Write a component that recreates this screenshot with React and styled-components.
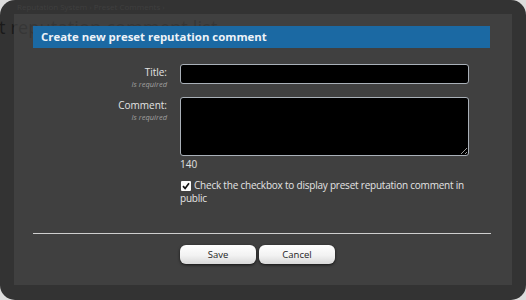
import styled, { createGlobalStyle } from 'styled-components';

const GlobalStyle = createGlobalStyle`
  html, body {
    margin: 0;
    padding: 0;
    background: #dcdcdc;
  }
  * {
    box-sizing: border-box;
  }
`;

export default function App() {
  return (
    <>
      <GlobalStyle />
      <Overlay>
        <Backdrop aria-hidden="true">
          <Crumb>Reputation System ›  Preset Comments ›</Crumb>
          <PageTitle>t reputation comment list</PageTitle>
        </Backdrop>

        <Panel>
          <Heading>Create new preset reputation comment</Heading>

          <Form>
            <Row>
              <Label>
                Title:
                <Hint>Is required</Hint>
              </Label>
              <Field>
                <TextBox type="text" />
              </Field>
            </Row>

            <Row>
              <Label>
                Comment:
                <Hint>Is required</Hint>
              </Label>
              <Field>
                <TextArea />
                <Counter>140</Counter>
              </Field>
            </Row>

            <Row>
              <Label />
              <Field>
                <CheckRow>
                  <Box>
                    <svg width="8" height="8" viewBox="0 0 8 8">
                      <path d="M1 4.2 L3.1 6.4 L7 1.2" fill="none" stroke="#111" strokeWidth="1.7" />
                    </svg>
                  </Box>
                  Check the checkbox to display preset reputation comment in public
                </CheckRow>
              </Field>
            </Row>
          </Form>

          <Divider />

          <Buttons>
            <Button>Save</Button>
            <Button>Cancel</Button>
          </Buttons>
        </Panel>
      </Overlay>
    </>
  );
}

const Overlay = styled.div`
  position: relative;
  width: 526px;
  height: 300px;
  background: #333333;
  border-radius: 15px;
  padding: 14px 14px 15px 14px;
  overflow: hidden;
  font-family: 'Open Sans', 'Liberation Sans', sans-serif;
`;

const Backdrop = styled.div`
  position: absolute;
  left: 0;
  top: 0;
  right: 0;
  pointer-events: none;
`;

const Crumb = styled.div`
  padding: 1px 0 0 17px;
  font-size: 8px;
  line-height: 11px;
  color: #3f3f3f;
`;

const PageTitle = styled.div`
  margin-top: 5px;
  margin-left: -1px;
  font-size: 18px;
  line-height: 20px;
  letter-spacing: 0.2px;
  color: #1a1a1a;
`;

const Panel = styled.div`
  position: relative;
  height: 100%;
  background: rgba(74, 74, 74, 0.6);
  padding-top: 12px;
`;

const Heading = styled.div`
  height: 22px;
  margin: 0 22px 0 19px;
  background: #1b69a3;
  color: #eef3f8;
  font-size: 11.4px;
  font-weight: 700;
  line-height: 22px;
  padding-left: 8px;
`;

const Form = styled.div`
  display: flex;
  flex-direction: column;
  gap: 8px;
  margin-top: 16px;
`;

const Row = styled.div`
  display: grid;
  grid-template-columns: 153px 289px;
  column-gap: 13px;
  align-items: start;
`;

const Label = styled.div`
  text-align: right;
  color: #e4e4e4;
  font-size: 10px;
  line-height: 13px;
  padding-top: 2px;
`;

const Hint = styled.div`
  font-size: 7.5px;
  line-height: 10px;
  font-style: italic;
  color: #a0a0a0;
`;

const Field = styled.div`
  display: flex;
  flex-direction: column;
`;

const TextBox = styled.input`
  width: 289px;
  height: 20px;
  background: #000;
  border: 1px solid #a9b0b8;
  border-radius: 3px;
  color: #fff;
  outline: none;
`;

const TextArea = styled.textarea`
  width: 289px;
  height: 59px;
  background: #000;
  border: 1px solid #a9b0b8;
  border-radius: 3px;
  color: #fff;
  outline: none;
  resize: vertical;
  display: block;
`;

const Counter = styled.div`
  margin-top: 2px;
  font-size: 10px;
  line-height: 13px;
  color: #e0e0e0;
`;

const CheckRow = styled.div`
  font-size: 10px;
  line-height: 13px;
  letter-spacing: -0.22px;
  color: #e4e4e4;
`;

const Box = styled.span`
  display: inline-flex;
  align-items: center;
  justify-content: center;
  width: 10px;
  height: 10px;
  background: #fbfbfb;
  border-radius: 1px;
  margin: 0 3px 0 1px;
  vertical-align: -1px;
`;

const Divider = styled.div`
  margin: 28px 21px 0 19px;
  height: 1px;
  background: #cfcfcf;
`;

const Buttons = styled.div`
  display: flex;
  gap: 3px;
  margin-top: 11px;
  padding-left: 166px;
`;

const Button = styled.button`
  width: 76px;
  height: 19px;
  border: none;
  border-radius: 6px;
  background: linear-gradient(#ffffff, #f2f2f2 55%, #d9d9d9);
  box-shadow: 0 1px 3px rgba(0, 0, 0, 0.7);
  font-family: 'Open Sans', 'Liberation Sans', sans-serif;
  font-size: 9.5px;
  color: #1c1c1c;
  padding: 0;
  cursor: pointer;
`;
